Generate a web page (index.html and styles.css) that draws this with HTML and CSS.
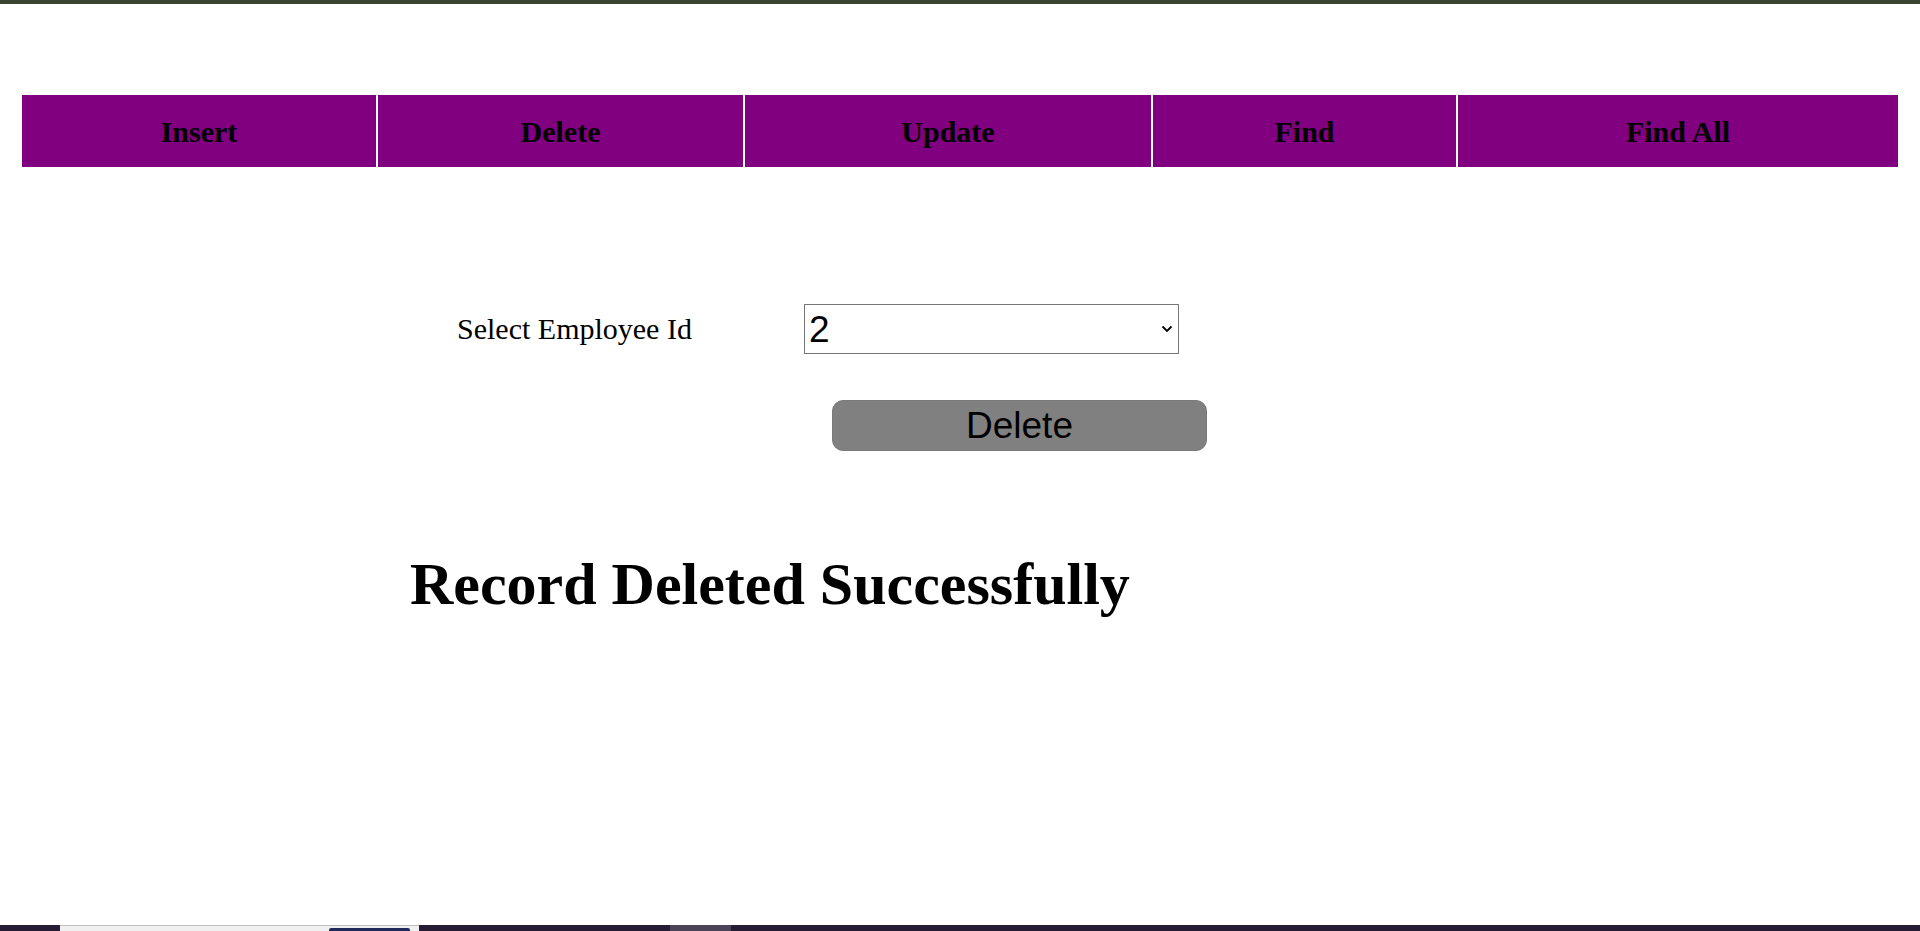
FILE: index.html
```html
<!DOCTYPE html>
<html lang="en">
<head>
<meta charset="utf-8">
<title>Delete Employee</title>
<link rel="stylesheet" href="styles.css">
</head>
<body>
<div class="topstrip"></div>
<main class="page">
  <nav class="menu">
    <div class="menu-item w-insert">Insert</div>
    <div class="menu-item w-delete">Delete</div>
    <div class="menu-item w-update">Update</div>
    <div class="menu-item w-find">Find</div>
    <div class="menu-item w-findall">Find All</div>
  </nav>
  <form class="form">
    <div class="form-row">
      <label class="label" for="empid">Select Employee Id</label>
      <div class="select-wrap">
        <select id="empid" class="select">
          <option>2</option>
        </select>
        <svg class="chevron" width="12" height="8" viewBox="0 0 12 8"><path d="M1.5 1.5 L6 6 L10.5 1.5" fill="none" stroke="#000" stroke-width="1.8"/></svg>
      </div>
    </div>
    <div class="button-row">
      <button type="button" class="btn">Delete</button>
    </div>
  </form>
  <h1 class="message">Record Deleted Successfully</h1>
</main>
<footer class="taskbar">
  <div class="tb-left"></div>
  <div class="tb-window"><div class="tb-blue"></div></div>
  <div class="tb-gap"></div>
  <div class="tb-active"></div>
  <div class="tb-rest"></div>
</footer>
</body>
</html>
```
FILE: styles.css
```css
html, body {
  margin: 0;
  padding: 0;
  height: 100%;
  background: #ffffff;
}
body {
  display: flex;
  flex-direction: column;
  font-family: "Liberation Serif", "Times New Roman", serif;
  font-size: 30px;
  color: #000;
  overflow: hidden;
}
.topstrip {
  height: 4px;
  background: #3a4530;
  flex: none;
}
.page {
  flex: 1;
}
.menu {
  display: flex;
  gap: 2px;
  margin: 91px 22px 0 22px;
  height: 72px;
}
.menu-item {
  background: #800080;
  display: flex;
  align-items: center;
  justify-content: center;
  font-weight: bold;
  font-size: 30px;
  line-height: 30px;
  padding-top: 1px;
  box-sizing: border-box;
}
.w-insert { width: 354px; }
.w-delete { width: 365px; }
.w-update { width: 406px; }
.w-find { width: 303px; }
.w-findall { width: 440px; }

.form {
  margin: 0;
}
.form-row {
  display: flex;
  align-items: center;
  margin-top: 137px;
  padding-left: 457px;
  height: 50px;
}
.label {
  width: 347px;
  line-height: 30px;
  font-size: 30px;
}
.select-wrap {
  position: relative;
  width: 375px;
  height: 50px;
}
.select {
  appearance: none;
  -webkit-appearance: none;
  width: 375px;
  height: 50px;
  box-sizing: border-box;
  border: 1px solid #767676;
  border-radius: 0;
  background: #fff;
  font-family: "Liberation Sans", Arial, sans-serif;
  font-size: 37px;
  color: #000;
  padding: 0 0 0 4px;
  margin: 0;
}
.chevron {
  position: absolute;
  right: 6px;
  top: 21px;
  pointer-events: none;
}
.button-row {
  margin-top: 46px;
  padding-left: 832px;
}
.btn {
  width: 375px;
  height: 51px;
  box-sizing: border-box;
  border: 1px solid #7a7a7a;
  border-radius: 11px;
  background: #808080;
  font-family: "Liberation Sans", Arial, sans-serif;
  font-size: 37px;
  color: #000;
  padding: 0;
  margin: 0;
  line-height: 1;
}
.message {
  margin: 103px 0 0 410px;
  font-size: 60px;
  line-height: 60px;
  font-weight: bold;
}
.taskbar {
  flex: none;
  height: 6px;
  display: flex;
  background: #261d35;
}
.tb-left { width: 60px; }
.tb-window {
  width: 359px;
  background: #f0f0f0;
  border-top: 1px solid #c0c0c0;
  box-sizing: border-box;
  display: flex;
  align-items: flex-end;
  padding-left: 269px;
}
.tb-blue {
  width: 81px;
  height: 3px;
  background: #1f2a5a;
  border-radius: 2px 2px 0 0;
}
.tb-gap { width: 251px; }
.tb-active { width: 61px; background: #4b4358; }
.tb-rest { flex: 1; }
```
